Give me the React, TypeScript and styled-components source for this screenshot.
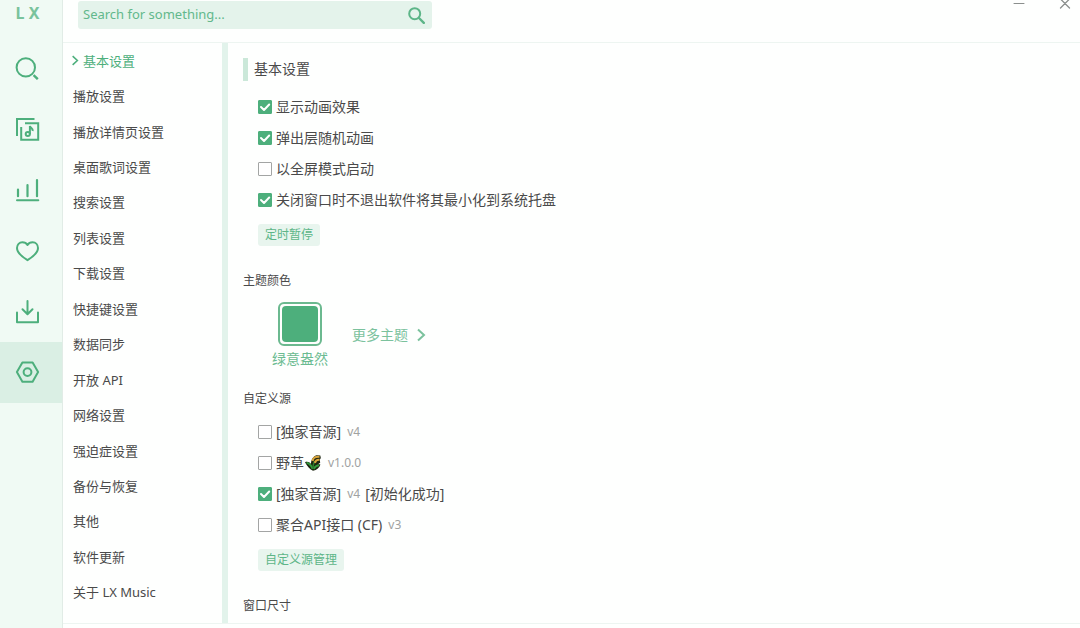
import React, { useState } from "react";
import styled, { createGlobalStyle } from "styled-components";

const green = "#4daf7c";

const GlobalStyle = createGlobalStyle`
  * { box-sizing: border-box; }
  body {
    margin: 0;
    background: #fefffe;
    color: #4a4a4a;
    font-family: "Noto Sans", "Noto Sans CJK SC", sans-serif;
    font-size: 14px;
  }
  button, input { font: inherit; color: inherit; }
  button { border: 0; padding: 0; background: none; cursor: pointer; }
`;

const Shell = styled.div`
  display: flex;
  height: 100vh;
  overflow: hidden;
`;

const Sidebar = styled.nav`
  flex: 0 0 62px;
  display: flex;
  flex-direction: column;
  background: #f0faf4;
`;

const Logo = styled.div`
  height: 37px;
  padding-top: 1px;
  text-align: center;
  font-size: 16px;
  font-weight: 700;
  line-height: 24px;
  padding-right: 7px;
  color: #79c39c;
`;

const SideLink = styled.a<{ $active?: boolean }>`
  display: flex;
  align-items: center;
  height: 61px;
  padding-left: 15px;
  color: ${green};
  background: ${(p) => (p.$active ? "#daefe4" : "transparent")};
`;

const Main = styled.div`
  flex: 1;
  min-width: 0;
  display: flex;
  flex-direction: column;
  border-left: 1px solid #e1ece6;
  padding-bottom: 4px;
`;

const Header = styled.header`
  flex: 0 0 43px;
  display: flex;
  justify-content: space-between;
  align-items: flex-start;
  border-bottom: 1px solid #edf5f1;
  padding-left: 15px;
`;

const SearchBox = styled.form`
  flex: 0 1 354px;
  display: flex;
  align-items: center;
  height: 28px;
  margin-top: 1px;
  border-radius: 3px;
  background: #e4f3eb;
  color: #5db588;
  padding: 0 7px 0 5px;
`;

const SearchInput = styled.input`
  flex: 1;
  min-width: 0;
  height: 20px;
  margin-bottom: 2px;
  border: 0;
  outline: 0;
  padding: 0;
  background: none;
  font-size: 13px;
  &::placeholder { color: #62b88c; opacity: 1; }
`;

const IconButton = styled.button`
  display: flex;
`;

const WindowControls = styled.div`
  display: flex;
  gap: 34px;
  padding-right: 9px;
  color: #8b8f8d;
`;

const Body = styled.div`
  flex: 1;
  min-height: 0;
  display: flex;
  border-bottom: 1px solid #edf5f1;
`;

const Menu = styled.nav`
  flex: 0 0 165px;
  display: flex;
  flex-direction: column;
  padding: 0 0 13px 10px;
  border-right: 6px solid #e2f3eb;
`;

const MenuLink = styled.a<{ $active?: boolean }>`
  flex: 1;
  display: flex;
  align-items: center;
  gap: 4px;
  font-size: 13px;
  line-height: 20px;
  text-decoration: none;
  white-space: nowrap;
  color: ${(p) => (p.$active ? green : "inherit")};
  svg { margin-left: -2px; }
`;

const Content = styled.main`
  flex: 1;
  min-width: 0;
  overflow: hidden;
  padding: 15px 15px 0;
`;

const Title = styled.h1`
  height: 23px;
  margin: 0 0 10px;
  padding-left: 6px;
  border-left: 5px solid #cbe8d9;
  font-size: 14px;
  font-weight: 400;
  line-height: 22px;
`;

const Heading = styled.h2`
  margin: 25px 0 0;
  font-size: 12px;
  font-weight: 400;
  line-height: 20px;
`;

const Options = styled.div<{ $top?: number }>`
  margin: ${(p) => p.$top ?? 0}px 0 9px 15px;
`;

const OptionRow = styled.div`
  display: flex;
  align-items: center;
  height: 31px;
  gap: 4px;
`;

const CheckCell = styled.span`
  display: grid;
  color: #fff;
  > * { grid-area: 1 / 1; }
  svg { pointer-events: none; }
`;

const CheckInput = styled.input`
  appearance: none;
  width: 14px;
  height: 14px;
  margin: 0;
  border: 1px solid #a3a5a4;
  border-radius: 1px;
  background: #fff;
  &:checked { background: ${green}; border-color: ${green}; }
`;

const OptionLabel = styled.label`
  display: flex;
  align-items: center;
  line-height: 22px;
  white-space: pre;
`;

const Version = styled.small`
  margin: 0 5px 0 6px;
  font-size: 12px;
  color: #a0a2a1;
`;

const SmallButton = styled.button`
  display: block;
  height: 22px;
  margin-left: 15px;
  padding: 0 7px;
  border-radius: 3px;
  background: #e8f5ee;
  color: #5db588;
  font-size: 12px;
  line-height: 22px;
`;

const Themes = styled.div`
  display: flex;
  align-items: flex-start;
  gap: 24px;
  margin: 11px 0 -5px 29px;
`;

const ThemeChoice = styled.button`
  display: flex;
  flex-direction: column;
  align-items: center;
  gap: 3px;
  line-height: 20px;
  color: #6bbb91;
`;

const Swatch = styled.span`
  display: flex;
  width: 44px;
  height: 44px;
  padding: 2px;
  border: 2px solid #6bb98f;
  border-radius: 6px;
  &::before {
    content: "";
    flex: 1;
    border-radius: 4px;
    background: ${green};
  }
`;

const MoreThemes = styled.button`
  display: flex;
  align-items: center;
  gap: 8px;
  margin-top: 23px;
  line-height: 20px;
  color: #7bc29d;
`;

const stroke = {
  fill: "none",
  stroke: "currentColor",
  strokeLinecap: "round" as const,
  strokeLinejoin: "round" as const,
};

const SideIcon = ({ children }: { children: React.ReactNode }) => (
  <svg width="25" height="24" viewBox="0 0 25 24" strokeWidth="2" aria-hidden="true" {...stroke}>
    {children}
  </svg>
);

const sideItems = [
  {
    name: "搜索",
    icon: <><circle cx="10.8" cy="11.4" r="9.2" /><path d="M18.6 19.2l4.2 4" strokeWidth="2.4" strokeLinecap="butt" /></>,
  },
  {
    name: "歌单",
    icon: (
      <g strokeLinecap="butt" strokeLinejoin="miter">
        <path d="M2 19V2h17.500M10 6.200h13.200v16.500H6.200V10" />
        <ellipse cx="12.800" cy="17" rx="2.100" ry="1.900" />
        <path d="M14.900 17V9c.4 2.300 3.200 2.200 2.800 5" />
      </g>
    ),
  },
  {
    name: "排行榜",
    icon: <><path d="M3 11.500v6.700M12.500 7v11.200M22 2v16.200" strokeWidth="2.200" /><path d="M2 22.300h21.300" /></>,
  },
  {
    name: "收藏",
    icon: <path d="M12.500 21.200C8 18.400 2 14.400 2 9 2 5.500 4.400 3.300 7.300 3.300c2.300 0 4.200 1 5.200 2.700 1-1.700 2.900-2.700 5.200-2.700C20.600 3.300 23 5.500 23 9c0 5.400-6 9.400-10.500 12.200z" />,
  },
  {
    name: "下载",
    icon: <path d="M12.500 1v13M7.500 9.300l5 5 5-5M2 12.500v9.700h21v-9.700" />,
  },
  {
    name: "设置",
    icon: <><path d="M7.400 1.500h10.200L23.100 11l-5.500 9.700H7.400L1.900 11z" /><circle cx="12.500" cy="11.100" r="3.900" /></>,
  },
];

const menuItems = [
  "基本设置", "播放设置", "播放详情页设置", "桌面歌词设置", "搜索设置", "列表设置",
  "下载设置", "快捷键设置", "数据同步", "开放 API", "网络设置", "强迫症设置",
  "备份与恢复", "其他", "软件更新", "关于 LX Music",
];

const Chevron = ({ w, h, weight }: { w: number; h: number; weight: number }) => (
  <svg width={w} height={h} viewBox="0 0 10 14" strokeWidth={weight} aria-hidden="true" {...stroke} strokeLinecap="butt" strokeLinejoin="miter">
    <path d="M2 1.500l6 5.500-6 5.500" />
  </svg>
);

const Wheat = () => (
  <svg width="18" height="18" viewBox="0 0 18 18" aria-hidden="true">
    <path d="M9 16.800C6 15.500 3 12 1 8.200c2.500-1 4.500 0 6 1.800C7 6 9 2.500 12.500 1.300l3.800.3.500 2.400-1 1.700.4 3-1.800 1.300 2 .5C15.500 13.500 13 16 9 16.800z" fill="#1c2410" />
    <path d="M2.500 8.800c2.800.4 4.800 2.700 6.200 6.200M15 11.300c-2.500 0-4 1.700-5.500 3.700" stroke="#33983c" strokeWidth="2" fill="none" />
    <path d="M9.200 15c-.5-4 .3-6 1.800-8" stroke="#2c7a2c" strokeWidth="1.500" fill="none" />
    <path d="M8.500 7C9 4 11.500 2.500 15.500 2.800M10.800 8.800c.8-2.300 2.500-3.300 4.700-3" stroke="#d6a33b" strokeWidth="2.200" fill="none" />
  </svg>
);

type OptionProps = {
  id: string;
  checked?: boolean;
  version?: string;
  note?: string;
  children: React.ReactNode;
};

function Option({ id, checked = false, version, note, children }: OptionProps) {
  const [on, setOn] = useState(checked);
  return (
    <OptionRow>
      <CheckCell>
        <CheckInput id={id} type="checkbox" checked={on} onChange={() => setOn(!on)} />
        {on && (
          <svg width="14" height="14" viewBox="0 0 14 14" strokeWidth="2" aria-hidden="true" {...stroke}>
            <path d="M3 7l3 3 5.200-5.500" />
          </svg>
        )}
      </CheckCell>
      <OptionLabel htmlFor={id}>
        {children}
        {version && <Version>{version}</Version>}
        {note}
      </OptionLabel>
    </OptionRow>
  );
}

export default function App() {
  return (
    <>
      <GlobalStyle />
      <Shell>
        <Sidebar>
          <Logo>L X</Logo>
          {sideItems.map((item) => (
            <SideLink key={item.name} href="#" aria-label={item.name} $active={item.name === "设置"}>
              <SideIcon>{item.icon}</SideIcon>
            </SideLink>
          ))}
        </Sidebar>
        <Main>
          <Header>
            <SearchBox onSubmit={(e) => e.preventDefault()}>
              <SearchInput aria-label="搜索" placeholder="Search for something..." />
              <IconButton aria-label="搜索">
                <svg width="17" height="17" viewBox="0 0 17 17" strokeWidth="2" aria-hidden="true" {...stroke}>
                  <circle cx="6.700" cy="6.700" r="5.500" />
                  <path d="M11 11l4.800 4.800" strokeWidth="2.400" />
                </svg>
              </IconButton>
            </SearchBox>
            <WindowControls>
              <IconButton aria-label="最小化">
                <svg width="12" height="10" viewBox="0 0 12 10" {...stroke}><path d="M1 3.500h10" /></svg>
              </IconButton>
              <IconButton aria-label="关闭">
                <svg width="12" height="10" viewBox="0 0 12 10" strokeWidth="1.300" {...stroke}><path d="M1.500-1l9 9M10.500-1l-9 9" /></svg>
              </IconButton>
            </WindowControls>
          </Header>
          <Body>
            <Menu>
              {menuItems.map((name, i) => (
                <MenuLink key={name} href="#" $active={i === 0}>
                  {i === 0 && <Chevron w={8} h={11} weight={2} />}
                  {name}
                </MenuLink>
              ))}
            </Menu>
            <Content>
              <Title>基本设置</Title>
              <Options>
                <Option id="animation" checked>显示动画效果</Option>
                <Option id="random" checked>弹出层随机动画</Option>
                <Option id="fullscreen">以全屏模式启动</Option>
                <Option id="tray" checked>关闭窗口时不退出软件将其最小化到系统托盘</Option>
              </Options>
              <SmallButton>定时暂停</SmallButton>

              <Heading>主题颜色</Heading>
              <Themes>
                <ThemeChoice>
                  <Swatch />
                  绿意盎然
                </ThemeChoice>
                <MoreThemes>
                  更多主题
                  <Chevron w={10} h={14} weight={2} />
                </MoreThemes>
              </Themes>

              <Heading>自定义源</Heading>
              <Options $top={7}>
                <Option id="source-1" version="v4">[独家音源]</Option>
                <Option id="source-2" version="v1.0.0">野草<Wheat /></Option>
                <Option id="source-3" checked version="v4" note="[初始化成功]">[独家音源]</Option>
                <Option id="source-4" version="v3">聚合API接口 (CF)</Option>
              </Options>
              <SmallButton>自定义源管理</SmallButton>

              <Heading>窗口尺寸</Heading>
            </Content>
          </Body>
        </Main>
      </Shell>
    </>
  );
}
